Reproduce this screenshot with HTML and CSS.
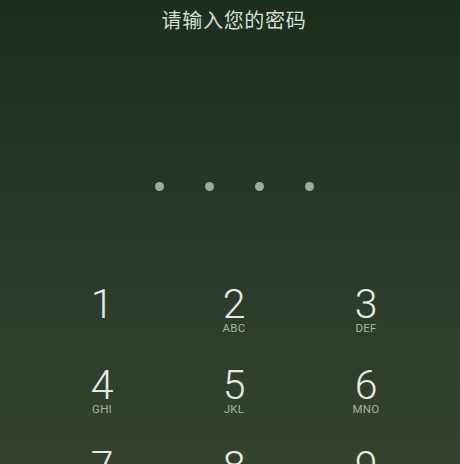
FILE: index.html
```html
<!DOCTYPE html>
<html lang="zh-CN">
<head>
<meta charset="utf-8">
<title>请输入您的密码</title>
<link rel="stylesheet" href="styles.css">
</head>
<body>
<div class="screen">
  <div class="title">请输入您的密码</div>
  <div class="dots">
    <span class="dot"></span><span class="dot"></span><span class="dot"></span><span class="dot"></span>
  </div>
  <div class="keypad">
    <div class="key"><span class="num">1</span><span class="letters"></span></div>
    <div class="key"><span class="num">2</span><span class="letters">ABC</span></div>
    <div class="key"><span class="num">3</span><span class="letters">DEF</span></div>
    <div class="key"><span class="num">4</span><span class="letters">GHI</span></div>
    <div class="key"><span class="num">5</span><span class="letters">JKL</span></div>
    <div class="key"><span class="num">6</span><span class="letters">MNO</span></div>
    <div class="key"><span class="num">7</span><span class="letters">PQRS</span></div>
    <div class="key"><span class="num">8</span><span class="letters">TUV</span></div>
    <div class="key"><span class="num">9</span><span class="letters">WXYZ</span></div>
  </div>
</div>
</body>
</html>
```
FILE: styles.css
```css
html, body {
  margin: 0;
  padding: 0;
  width: 460px;
  height: 464px;
  overflow: hidden;
}
body {
  background: linear-gradient(to bottom, #1c2f1f 0%, #233524 30%, #2b3b2b 60%, #35422f 100%);
  font-family: Roboto, "Noto Sans CJK SC", sans-serif;
}
.screen {
  display: flex;
  flex-direction: column;
  align-items: center;
  padding-left: 8px;
  height: 464px;
  box-sizing: border-box;
}
.title {
  margin-top: 10px;
  font-family: "Noto Sans CJK SC", sans-serif;
  font-size: 20px;
  line-height: 20px;
  color: #d9ddd5;
  letter-spacing: 0.7px;
}
.dots {
  margin-top: 152px;
  display: flex;
  gap: 41px;
}
.dot {
  width: 9px;
  height: 9px;
  border-radius: 50%;
  background: #9eac9c;
}
.keypad {
  margin-top: 95px;
  width: 396px;
  display: grid;
  grid-template-columns: repeat(3, 132px);
  row-gap: 33px;
}
.key {
  display: flex;
  flex-direction: column;
  align-items: center;
  height: 48px;
}
.num {
  font-family: Roboto, sans-serif;
  font-weight: 300;
  font-size: 41px;
  line-height: 36px;
  color: #e6ebe2;
}
.letters {
  font-family: Roboto, sans-serif;
  font-size: 11.5px;
  line-height: 12px;
  height: 12px;
  color: #a9b2a5;
  letter-spacing: 0.2px;
}
```
